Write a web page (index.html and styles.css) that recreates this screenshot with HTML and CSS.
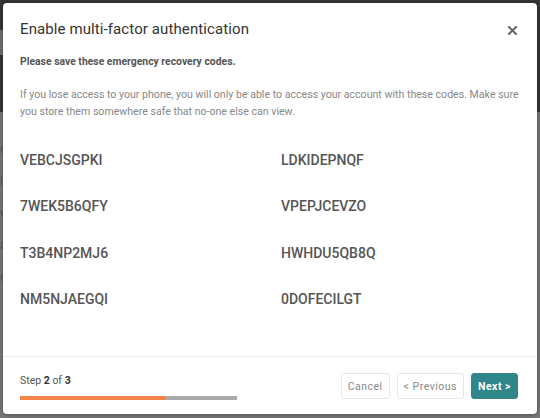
FILE: index.html
```html
<html>
<head>
<title>Enable multi-factor authentication</title>
<meta http-equiv="Content-Type" content="text/html; charset=UTF-8" />
<link rel="stylesheet" href="styles.css">
</head>
<body>

<!--Page behind the overlay-->
<div class="Page">
  <div class="Topbar">
    <div class="Navband"></div>
  </div>
  <div class="Pagebody">
    <p>o</p><p>i</p><p>v</p><p>a</p><p>c</p>
  </div>
</div>

<!--Modal-->
<div class="Modal">
  <div class="ModalHead">
    <div class="Title">Enable multi-factor authentication</div>
    <svg class="Close" width="9" height="9" viewBox="0 0 9 9"><path d="M1 1L8 8M8 1L1 8" stroke="#666" stroke-width="2" stroke-linecap="square"/></svg>
  </div>
  <div class="ModalBody">
    <div class="Lead">Please save these emergency recovery codes.</div>
    <div class="Info">If you lose access to your phone, you will only be able to access your account with these codes. Make sure you store them somewhere safe that no-one else can view.</div>
    <div class="Codes">
      <div>VEBCJSGPKI</div><div>LDKIDEPNQF</div>
      <div>7WEK5B6QFY</div><div>VPEPJCEVZO</div>
      <div>T3B4NP2MJ6</div><div>HWHDU5QB8Q</div>
      <div>NM5NJAEGQI</div><div>0DOFECILGT</div>
    </div>
  </div>
  <div class="ModalFoot">
    <div class="Step">
      <div class="StepText">Step <b>2</b> of <b>3</b></div>
      <div class="Bar"><div class="BarFill" style="width:66.7%"></div></div>
    </div>
    <div class="Buttons">
      <button class="Btn">Cancel</button>
      <button class="Btn">&lt; Previous</button>
      <button class="Btn Primary">Next &gt;</button>
    </div>
  </div>
</div>

</body>
</html>
```

FILE: styles.css
```css
body{
   margin:0;
   background:#777;
   font-family:Roboto, "Liberation Sans", sans-serif;
   overflow:hidden;
}
.Page{
   width:540px;
   height:418px;
}
.Topbar{
   height:112px;
   background:#343434;
   padding-top:30px;
   box-sizing:border-box;
}
.Navband{
   height:25px;
   width:200px;
   background:#6e6e6e;
}
.Pagebody{
   padding:30px 0 0 0;
   color:#555;
   font-size:12px;
}
.Pagebody p{
   margin:0 0 18px 0;
}
.Modal{
   position:absolute;
   top:3px;
   left:3px;
   width:534px;
   height:411px;
   background:#fff;
   border-radius:4px;
   box-shadow:0 1px 4px rgba(0,0,0,0.35);
   display:flex;
   flex-direction:column;
}
.ModalHead{
   display:flex;
   justify-content:space-between;
   align-items:flex-start;
   padding:16px 20px 0 17px;
}
.Title{
   font-size:15px;
   line-height:20px;
   color:#333;
   letter-spacing:0.1px;
}
.Close{
   margin-top:7px;
}
.ModalBody{
   flex:1;
   padding:15px 10px 0 17px;
}
.Lead{
   font-size:10.4px;
   line-height:16px;
   font-weight:700;
   color:#555;
}
.Info{
   margin-top:16px;
   font-size:10.6px;
   line-height:17px;
   color:#888;
}
.Codes{
   margin-top:30px;
   display:grid;
   grid-template-columns:261px 1fr;
   row-gap:26.4px;
   font-size:14px;
   line-height:20px;
   font-weight:500;
   color:#555;
}
.ModalFoot{
   border-top:1px solid #eee;
   display:flex;
   justify-content:space-between;
   align-items:flex-start;
   padding:16px 19px 0 17px;
   height:58px;
   box-sizing:border-box;
}
.StepText{
   font-size:10.5px;
   line-height:16px;
   color:#555;
}
.StepText b{
   color:#333;
}
.Bar{
   margin-top:7px;
   width:217px;
   height:4px;
   background:#aaa;
}
.BarFill{
   height:4px;
   background:#f5844a;
}
.Buttons{
   display:flex;
   gap:7px;
}
.Btn{
   height:26px;
   padding:0 6px;
   border:1px solid #e6e6e6;
   border-radius:3px;
   background:#fff;
   font-family:Roboto, "Liberation Sans", sans-serif;
   font-size:10.5px;
   letter-spacing:0.5px;
   color:#888;
}
.Primary{
   background:#2f878c;
   border-color:#2f878c;
   color:#fff;
   font-weight:700;
   padding:0 6px;
}
```
